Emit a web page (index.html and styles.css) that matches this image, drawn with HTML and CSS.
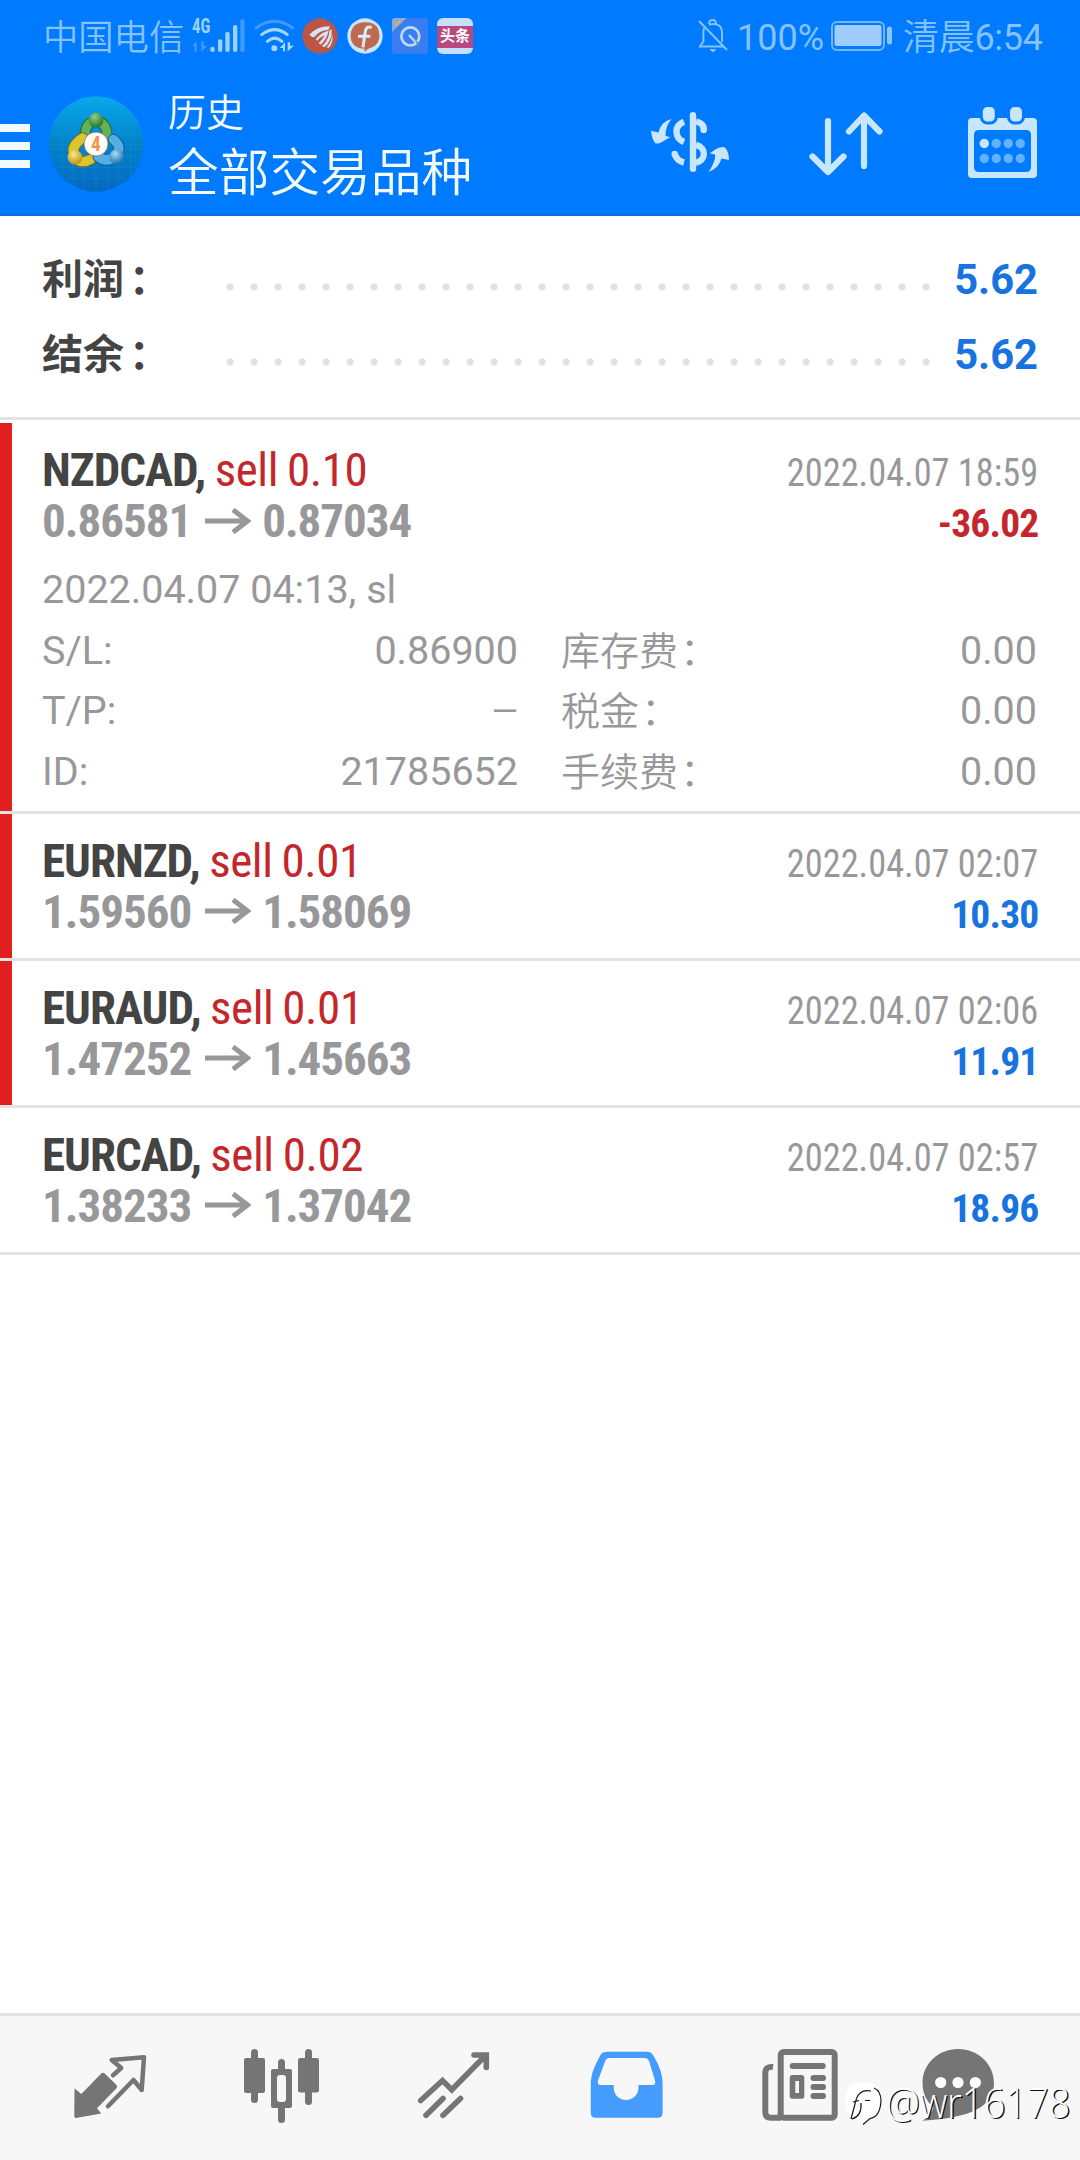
FILE: index.html
```html
<!DOCTYPE html>
<html lang="zh-CN">
<head>
<meta charset="utf-8">
<title>历史</title>
<link rel="stylesheet" href="styles.css">
</head>
<body>
<div class="screen">
  <div class="top">
    <div class="status">
      <span class="carrier">中国电信</span>
      <svg class="signal" width="58" height="36" viewBox="30 24 174 108">
        <text class="net" x="36" y="70" textLength="55" lengthAdjust="spacingAndGlyphs">4G</text>
        <g fill="#3f9cff"><path d="M36 108L50 94V125H44V108ZM64 94V125L82 108H71V94Z"/><rect x="181" y="28" width="13" height="98" rx="5"/></g>
        <g fill="#9ad2ff"><rect x="91" y="110" width="13" height="16" rx="6"/><rect x="114" y="88" width="13" height="38" rx="6"/><rect x="136" y="66" width="13" height="60" rx="6"/><rect x="159" y="45" width="13" height="81" rx="6"/></g>
      </svg>
      <svg class="wifi" width="42" height="36" viewBox="222 24 126 108">
        <g fill="none" stroke-width="9" stroke-linecap="round"><path d="M229 54Q284 14 338 54" stroke="#3f9cff"/><path d="M245 74Q284 44 322 74M262 94Q284 75 306 94" stroke="#a5d6ff"/></g>
        <circle cx="283" cy="115" r="9" fill="#a5d6ff"/><path fill="#a5d6ff" d="M299 114L315 97V124H309V114ZM323 97V124L342 107H330V97Z"/>
      </svg>
      <svg class="app" width="36" height="36" viewBox="366 24 108 108">
        <circle cx="420" cy="78" r="53" fill="#bb5546"/>
        <path fill="#d9e2f5" d="M388 74Q412 48 450 49L445 60Q420 60 402 82Q396 82 388 74ZM407 88Q424 66 446 62Q440 88 422 104L416 99Q430 86 434 76Q420 82 412 92ZM426 108Q446 92 449 60L455 58Q458 92 433 112ZM440 112Q456 96 456 72Q463 94 446 114Z"/>
      </svg>
      <svg class="app" width="36" height="36" viewBox="501 24 108 108">
        <circle cx="555" cy="78" r="53" fill="#c9e4fb"/>
        <path fill="#bd6a4e" d="M555 37C588 37 598 54 598 78C598 103 580 112 565 116L553 126L554 116C527 116 512 101 512 78C512 52 528 37 555 37Z"/>
        <path d="M575 53C561 47 557 55 555 69L549 112M534 79H571" fill="none" stroke="#dcebfa" stroke-width="9"/>
      </svg>
      <svg class="app" width="36" height="36" viewBox="636 24 108 108">
        <rect x="636" y="24" width="108" height="108" rx="10" fill="#3a7df0"/>
        <path d="M646 24H680L636 66V34Q636 24 646 24Z" fill="#8fa9d0"/><path d="M645 46L662 33" stroke="#c2b384" stroke-width="8"/>
        <circle cx="691" cy="79" r="27" fill="none" stroke="#b9dcff" stroke-width="8"/>
        <path d="M687 75L708 98" stroke="#b9dcff" stroke-width="7"/><path d="M706 92L719 98L713 107Z" fill="#5f9b83"/>
      </svg>
      <div class="toutiao"><span>头条</span></div>
      <svg class="bell" width="30" height="34" viewBox="0 0 30 34" fill="none" stroke="#84c3ff" stroke-width="2">
        <path d="M1 2L29 31M6 9Q5 12 5.500 22L2 27.500H25M11 5.500Q24 3 24 14V23M11 5Q11 1 14.500 1T18 5"/><path d="M12 30.500H18L15 33Z" fill="#84c3ff" stroke-width="1"/>
      </svg>
      <span class="pct">100%</span>
      <svg class="battery" width="61" height="30" viewBox="0 0 61 30">
        <rect x="1" y="1" width="52" height="28" rx="5" fill="none" stroke="#6fb8ff" stroke-width="2"/><rect x="3.500" y="4" width="47" height="21" rx="2" fill="#9fccff"/><rect x="56" y="5.500" width="5" height="18" rx="2.500" fill="#8dc6ff"/>
      </svg>
      <span class="clock"><span class="daypart">清晨</span>6:54</span>
    </div>
    <div class="appbar">
      <div class="menu"><i></i><i></i><i></i></div>
      <svg class="logo" width="96" height="96" viewBox="144 18 288 288">
        <defs>
          <linearGradient id="sky" x1="0" y1="0" x2="0" y2="1"><stop offset="0" stop-color="#08a8ea"/><stop offset=".5" stop-color="#0283cb"/><stop offset="1" stop-color="#0569be"/></linearGradient>
          <radialGradient id="gr" cx=".4" cy=".3" r=".7"><stop offset="0" stop-color="#8fd08a"/><stop offset="1" stop-color="#23782f"/></radialGradient>
          <radialGradient id="ye" cx=".4" cy=".3" r=".7"><stop offset="0" stop-color="#fbe98a"/><stop offset="1" stop-color="#b89412"/></radialGradient>
          <radialGradient id="bl" cx=".4" cy=".3" r=".7"><stop offset="0" stop-color="#a8dcf5"/><stop offset="1" stop-color="#1c70b0"/></radialGradient>
        </defs>
        <circle cx="288" cy="162" r="143" fill="url(#sky)"/>
        <path d="M188 60V262M220 38V288M252 24V302M288 20V304M324 24V302M356 36V290M392 62V262M182 66H394M162 98H414M148 130H428M146 164H430M152 198H424M168 232H408M196 264H380" stroke="#2b9cd9" stroke-width="1.500" opacity=".55"/>
        <g fill="none" stroke-linecap="round">
          <path d="M256 140Q254 94 288 94T322 148" stroke="#1f6d35" stroke-width="32"/><path d="M256 140Q254 94 288 94T322 148" stroke="#64b256" stroke-width="26"/>
          <path d="M248 144Q209 170 224 198T272 208" stroke="#7c6a1a" stroke-width="34"/><path d="M248 144Q209 170 224 198T272 208" stroke="#dbc52e" stroke-width="28"/>
          <path d="M340 148Q370 172 346 198Q322 220 294 200" stroke="#155d93" stroke-width="34"/><path d="M340 148Q370 172 346 198Q322 220 294 200" stroke="#55aee0" stroke-width="28"/>
        </g>
        <circle cx="288" cy="90" r="22" fill="url(#gr)"/><circle cx="225" cy="202" r="22" fill="url(#ye)"/><circle cx="350" cy="200" r="22" fill="url(#bl)"/>
        <circle cx="288" cy="162" r="36" fill="#fffdfa" stroke="#6b6150" stroke-width="2"/>
        <text class="four" x="288" y="182" text-anchor="middle">4</text>
      </svg>
      <div class="titles"><div class="t1">历史</div><div class="t2">全部交易品种</div></div>
      <div class="tools">
        <svg width="84" height="96" viewBox="648 96 84 96">
          <g fill="none" stroke="#c9e6ff" stroke-width="6.400">
            <path d="M693 115.200V168.800" stroke-linecap="round"/>
            <path d="M696 121.500Q704.500 123.500 703.800 130.500" /><circle cx="703.700" cy="130" r="3.200" fill="#c9e6ff" stroke="none"/>
            <path d="M684 121.800C673.500 126 674.500 138 684 142"/>
            <path d="M696 144.800C707 147.500 706 160.500 696 162.800"/>
            <path d="M674.700 154Q677 161 684 162.500"/><circle cx="674.700" cy="154" r="3.200" fill="#c9e6ff" stroke="none"/>
          </g>
          <path fill="#c9e6ff" d="M671.500 119Q661 121.500 658.500 132.500L651 130.700Q651.500 138 655 143Q657 144.500 662 142L670 137.300L665.500 135.800Q665.500 126 671.500 119ZM708.400 172Q719 168 721.500 158.500L729 160Q729 152 725 147.500Q722 146 716 149L709.800 153.200L715.300 154.700Q715 163 708.400 172Z"/>
        </svg>
        <svg width="84" height="96" viewBox="804 96 84 96">
          <path d="M828 121V171M812.500 156.500L828 172L843.500 156.500M864 117V166M849 131.500L864 115.500L879.500 131.500" fill="none" stroke="#c9e6ff" stroke-width="6.200" stroke-linecap="round" stroke-linejoin="round"/>
        </svg>
        <svg width="84" height="96" viewBox="960 96 84 96">
          <path fill="#c9e6ff" fill-rule="evenodd" d="M972 118H1033Q1037 118 1037 122V174Q1037 178 1033 178H972Q968 178 968 174V122Q968 118 972 118ZM979 130Q974 130 974 135V167Q974 172 979 172H1026Q1031 172 1031 167V135Q1031 130 1026 130Z"/>
          <g fill="#c9e6ff" stroke="#007aff" stroke-width="3"><rect x="981.300" y="105.500" width="15" height="17.500" rx="6"/><rect x="1008.500" y="105.500" width="15" height="17.500" rx="6"/></g>
          <g fill="#62b3ff"><circle cx="984.300" cy="143.500" r="4.700" fill="#c9e6ff"/><circle cx="996.300" cy="143.500" r="4.700"/><circle cx="1008.300" cy="143.500" r="4.700"/><circle cx="1020.300" cy="143.500" r="4.700"/><circle cx="984.300" cy="158.500" r="4.700"/><circle cx="996.300" cy="158.500" r="4.700"/><circle cx="1008.300" cy="158.500" r="4.700"/><circle cx="1020.300" cy="158.500" r="4.700"/></g>
        </svg>
      </div>
    </div>
  </div>

  <div class="summary">
    <div class="sum-row"><span class="sum-label">利润<b>：</b></span><span class="dots"></span><span class="sum-value">5.62</span></div>
    <div class="sum-row"><span class="sum-label">结余<b>：</b></span><span class="dots"></span><span class="sum-value">5.62</span></div>
  </div>

  <div class="trades">
    <div class="trade marked first">
      <div class="line head"><span><span class="symbol">NZDCAD,</span> <span class="side">sell 0.10</span></span><span class="date">2022.04.07 18:59</span></div>
      <div class="line"><span class="prices">0.86581<svg class="arrow" width="46" height="26" viewBox="0 0 46 26"><path d="M0 13H42M28 1.800L42.500 13L28 24.200" /></svg>0.87034</span><span class="profit loss">-36.02</span></div>
      <div class="details">
        <div class="opened">2022.04.07 04:13, sl</div>
        <div class="pair"><span>S/L:</span><span>0.86900</span></div><div class="pair"><span class="zh">库存费<b>：</b></span><span>0.00</span></div>
        <div class="pair"><span>T/P:</span><span class="none">—</span></div><div class="pair"><span class="zh">税金<b>：</b></span><span>0.00</span></div>
        <div class="pair"><span>ID:</span><span>21785652</span></div><div class="pair"><span class="zh">手续费<b>：</b></span><span>0.00</span></div>
      </div>
    </div>
    <div class="trade marked">
      <div class="line head"><span><span class="symbol">EURNZD,</span> <span class="side">sell 0.01</span></span><span class="date">2022.04.07 02:07</span></div>
      <div class="line"><span class="prices">1.59560<svg class="arrow" width="46" height="26" viewBox="0 0 46 26"><path d="M0 13H42M28 1.800L42.500 13L28 24.200" /></svg>1.58069</span><span class="profit">10.30</span></div>
    </div>
    <div class="trade marked">
      <div class="line head"><span><span class="symbol">EURAUD,</span> <span class="side">sell 0.01</span></span><span class="date">2022.04.07 02:06</span></div>
      <div class="line"><span class="prices">1.47252<svg class="arrow" width="46" height="26" viewBox="0 0 46 26"><path d="M0 13H42M28 1.800L42.500 13L28 24.200" /></svg>1.45663</span><span class="profit">11.91</span></div>
    </div>
    <div class="trade">
      <div class="line head"><span><span class="symbol">EURCAD,</span> <span class="side">sell 0.02</span></span><span class="date">2022.04.07 02:57</span></div>
      <div class="line"><span class="prices">1.38233<svg class="arrow" width="46" height="26" viewBox="0 0 46 26"><path d="M0 13H42M28 1.800L42.500 13L28 24.200" /></svg>1.37042</span><span class="profit">18.96</span></div>
    </div>
  </div>

  <div class="nav">
    <svg width="80" height="90" viewBox="70 2040 80 90">
      <path fill="#757575" d="M74.500 2088.300L81.300 2094L101.300 2073.500Q103 2072 104.700 2073.500L116.500 2085Q117.800 2086.700 116.500 2088.300L97 2108.300L101.200 2113.500L76 2117.900Q74.300 2117.900 74.300 2116Z"/>
      <path d="M113 2075.300L121.200 2068L111.700 2060L144 2057.200L141.700 2090L133.500 2080L108 2106.300" fill="none" stroke="#757575" stroke-width="4.500" stroke-linecap="round" stroke-linejoin="round"/>
    </svg>
    <svg width="80" height="90" viewBox="243 2040 80 90" fill="#757575">
      <rect x="244" y="2058" width="21" height="35" rx="2"/><rect x="251" y="2049" width="7" height="54" rx="3.500"/>
      <rect x="298" y="2058" width="21" height="34.500" rx="2"/><rect x="305" y="2049" width="7" height="56" rx="3.500"/>
      <rect x="278" y="2059" width="7" height="20" rx="3.500"/><rect x="278" y="2100" width="7" height="23" rx="3.500"/>
      <rect x="271" y="2069" width="21" height="39" rx="2"/><rect x="277" y="2075" width="9" height="27" rx="3" fill="#f7f7f7"/>
    </svg>
    <svg width="80" height="90" viewBox="416 2040 80 90">
      <path d="M420.700 2100.500L442.500 2080.500L451.800 2089.700L485 2056M474 2055H486.300V2067.500M426 2115.300L443 2098.500M443 2115.300L460.500 2098.500" fill="none" stroke="#757575" stroke-width="5.600" stroke-linecap="round"/>
    </svg>
    <svg width="80" height="90" viewBox="589 2040 80 90">
      <path fill="#459cff" fill-rule="evenodd" d="M607 2051.700H647Q651 2051.700 653 2055C659 2065 662.600 2074 662.600 2084V2113Q662.600 2117.700 658 2117.700H595.500Q590.800 2117.700 590.800 2113V2084C590.800 2074 595 2065 600.500 2055Q602.500 2051.700 607 2051.700ZM609.500 2058Q606.500 2058 605.200 2061L598 2080.500Q597 2085 601 2085H613.700V2088C614.500 2104 637.500 2104 638.500 2088V2085H652.500Q656 2085 655 2080.500L649 2061Q647.700 2058 644.500 2058Z"/>
    </svg>
    <svg width="80" height="90" viewBox="762 2040 80 90">
      <g fill="none" stroke="#757575" stroke-width="6"><rect x="780.700" y="2052" width="54" height="65.700" rx="3"/><path d="M773 2067Q765.300 2066 765.300 2073V2112Q765.300 2117.700 771 2117.700H781"/></g>
      <g fill="#757575"><rect x="789.700" y="2063" width="36" height="6" rx="3"/><path fill-rule="evenodd" d="M792 2075H802Q804.300 2075 804.300 2077.500V2096.500Q804.300 2098.800 802 2098.800H792Q789.700 2098.800 789.700 2096.500V2077.500Q789.700 2075 792 2075ZM795.300 2081V2093H799V2081Z"/><rect x="810.500" y="2075" width="15.500" height="6" rx="3"/><rect x="810.500" y="2084" width="15.500" height="6" rx="3"/><rect x="810.500" y="2093" width="15.500" height="6" rx="3"/></g>
    </svg>
    <svg class="chat" width="80" height="90" viewBox="918 2040 80 90">
      <path fill="#757575" d="M958.300 2049C978 2049 994 2064 994 2083C994 2107 970 2118 922.700 2120.700Q931 2115 933.500 2107.500C926 2101 922.500 2092 922.500 2083C922.500 2064 938 2049 958.300 2049Z"/>
      <circle cx="940.700" cy="2082.500" r="5.600" fill="#fff"/><circle cx="958" cy="2082.500" r="5.600" fill="#fff"/><circle cx="975.300" cy="2082.500" r="5.600" fill="#fff"/>
    </svg>
  </div>

  <div class="watermark">
    <svg width="44" height="46" viewBox="842 2080 44 46">
      <path fill="#fff" d="M864 2082C878 2082 882 2090 882 2101C882 2112 876 2119 867 2119L861 2125L860 2119C849 2119 845 2111 845 2101C845 2089 850 2082 864 2082Z"/>
      <path d="M874 2088Q881 2091 881 2101Q880 2117 870 2118.500L863 2124.500M851 2119L855 2104Q858 2088 871 2091M853 2102L859 2100.500M865 2100.500H870M861 2103Q862 2116 852 2119" fill="none" stroke="#161616" stroke-width="1.200"/>
    </svg>
    <span>@wr16178</span>
  </div>
</div>
</body>
</html>
```
FILE: styles.css
```css
* { box-sizing: border-box; }
body { margin: 0; background: #fff; font-family: Roboto, "Noto Sans CJK SC", sans-serif; }
svg { display: block; flex: none; }
b { font-weight: inherit; }

.screen { position: relative; width: 1080px; height: 2160px; display: flex; flex-direction: column; background: #fff; overflow: hidden; }

.top { height: 216px; background: #007aff; border-bottom: 3px solid #0a6ee0; flex: none; }
.status { height: 72px; display: flex; align-items: center; padding: 0 34px 0 43px; color: #84c3ff; font-size: 35.3px; line-height: 68px; white-space: nowrap; }
.carrier { width: 147px; padding-top: 4px; font-weight: 350; }
.signal { overflow: visible; }
.wifi { margin-left: 6px; }
.app, .toutiao { margin-left: 9px; }
.wifi + .app { margin-left: 6px; }
.net { font: 700 60px "Roboto Condensed", Roboto, sans-serif; fill: #9ad2ff; }
.toutiao { width: 36px; height: 36px; border-radius: 6px; background: linear-gradient(#c8e0ff 8px, #b8487f 8px, #b8487f 30px, #c8e0ff 30px); color: #fff; font-size: 15px; font-weight: 700; line-height: 36px; text-align: center; }
.bell { margin-left: auto; }
.pct { margin-left: 9px; width: 86px; padding-top: 3px; font-size: 36px; }
.battery { margin-left: 8px; }
.clock { margin-left: 11px; width: 143px; padding-top: 3px; font-size: 36px; letter-spacing: -.3px; }
.daypart { font-weight: 350; }

.appbar { height: 141px; display: flex; }
.menu { width: 30px; display: flex; flex-direction: column; gap: 10px; padding-top: 52px; }
.menu i { height: 8px; background: #f0faff; }
.logo { margin: 24px 0 0 18px; }
.four { font: 700 58px "Roboto Condensed", Roboto, sans-serif; fill: #f0954a; }
.titles { margin-left: 24px; padding-top: 16px; color: #f4fbff; font-weight: 350; white-space: nowrap; }
.t1 { font-size: 38px; line-height: 50px; }
.t2 { margin-top: 6px; font-size: 50.7px; line-height: 60px; }
.tools { margin-left: auto; padding: 24px 36px 0 0; display: flex; gap: 72px; }

.summary { height: 204px; padding: 26px 42px 0; border-bottom: 3px solid #e3e3e4; flex: none; }
.sum-row { height: 75px; line-height: 75px; display: flex; font-size: 41.7px; font-weight: 700; white-space: nowrap; }
.sum-label { width: 176px; padding-top: 1px; color: #444; font-size: 41px; }
.sum-label b { margin-left: 5px; }
.dots { width: 720px; height: 24px; margin-top: 33px; background: radial-gradient(circle at 12px 12px, #e1e1e2 3px, transparent 4.200px) 0 0 / 24px 24px; }
.sum-value { margin-left: auto; color: #1673e0; }

.trades { padding-top: 3px; }
.trade { position: relative; padding: 21px 42px; border-bottom: 3px solid #e3e3e4; font-family: "Roboto Condensed", Roboto, sans-serif; }
.marked::before { content: ""; position: absolute; left: 0; top: 0; bottom: 0; width: 12px; background: #e11f1f; }
.line { height: 51px; line-height: 51px; display: flex; justify-content: space-between; align-items: baseline; font-size: 47px; white-space: nowrap; }
.head { word-spacing: -1.500px; }
.symbol { color: #444; font-weight: 700; letter-spacing: -1px; }
.side { color: #c4262b; letter-spacing: -.4px; }
.date { color: #98989a; font-size: 39.500px; word-spacing: 0; transform: scaleX(.92); transform-origin: 100% 0; }
.prices { display: flex; align-items: baseline; color: #98989b; font-weight: 700; letter-spacing: -1px; }
.arrow { align-self: center; margin: 0 11px 0 14px; }
.arrow path { fill: none; stroke: #98989b; stroke-width: 5; }
.profit { margin-right: -.5px; color: #1673e0; font-size: 39.500px; font-weight: 700; letter-spacing: -.8px; }
.loss { color: #c4262b; }

.first { padding-bottom: 8.500px; }
.details { margin-top: 14px; display: grid; grid-template-columns: 476px 476px; column-gap: 43px; grid-auto-rows: 60.600px; font-family: Roboto, "Noto Sans CJK SC", sans-serif; font-size: 39.500px; line-height: 60.600px; color: #98989a; white-space: nowrap; }
.opened { grid-column: 1 / -1; }
.pair { display: flex; justify-content: space-between; }
.pair .zh { padding-top: 1px; font-size: 39px; font-weight: 350; }
.zh b { margin-left: 2px; }
.none { font-size: 34px; }

.nav { margin-top: auto; height: 147px; padding: 24px 0 0 70px; border-top: 3px solid #e1e1e1; background: #f7f7f7; display: flex; gap: 93px; flex: none; }
.chat { margin-left: -17px; }

.watermark { position: absolute; left: 842px; top: 2080px; display: flex; }
.watermark span { margin-top: -3px; font: 300 41.500px/50px "Open Sans", sans-serif; color: #fff; text-shadow: 1.500px 1px 0 #111; transform: scaleX(.915); transform-origin: 0 0; }
```
